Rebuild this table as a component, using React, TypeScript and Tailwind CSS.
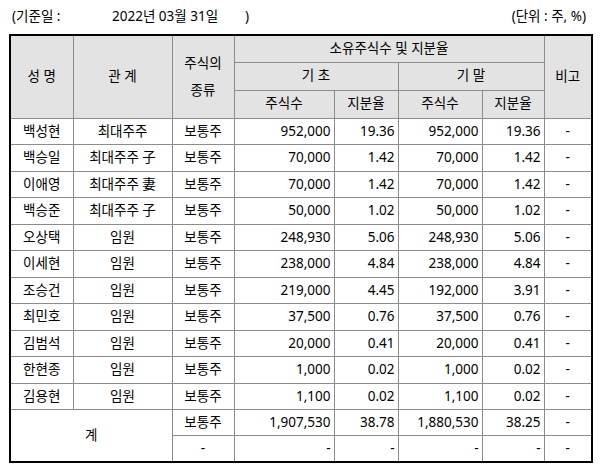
import React from "react";

const rows = [
  ["백성현", "최대주주", "952,000", "19.36", "952,000", "19.36"],
  ["백승일", "최대주주 子", "70,000", "1.42", "70,000", "1.42"],
  ["이애영", "최대주주 妻", "70,000", "1.42", "70,000", "1.42"],
  ["백승준", "최대주주 子", "50,000", "1.02", "50,000", "1.02"],
  ["오상택", "임원", "248,930", "5.06", "248,930", "5.06"],
  ["이세현", "임원", "238,000", "4.84", "238,000", "4.84"],
  ["조승건", "임원", "219,000", "4.45", "192,000", "3.91"],
  ["최민호", "임원", "37,500", "0.76", "37,500", "0.76"],
  ["김범석", "임원", "20,000", "0.41", "20,000", "0.41"],
  ["한현종", "임원", "1,000", "0.02", "1,000", "0.02"],
  ["김용현", "임원", "1,100", "0.02", "1,100", "0.02"],
];

const c = "border border-[#8c8c8c] text-center p-0";
const n = "border border-[#8c8c8c] text-right pr-[3px] p-0";
const h = "border border-[#8c8c8c] text-center p-0 bg-[#e3e3e3] font-normal";

export default function App() {
  return (
    <div
      className="w-[606px] h-[473px] bg-white text-black text-[13.5px] leading-none"
      style={{ fontFamily: '"Noto Sans", "Noto Sans CJK KR", sans-serif' }}
    >
      <div className="flex items-center h-[34px] pl-[12px] pr-[20px]">
        <span className="w-[100px]">(기준일 :</span>
        <span>2022년 03월 31일</span>
        <span className="ml-[27px]">)</span>
        <span className="ml-auto">(단위 : 주, %)</span>
      </div>
      <table className="ml-[9px] border-collapse border-2 border-black table-fixed w-[582px]">
        <colgroup>
          <col className="w-[63px]" />
          <col className="w-[99px]" />
          <col className="w-[62px]" />
          <col className="w-[100px]" />
          <col className="w-[64px]" />
          <col className="w-[84px]" />
          <col className="w-[62px]" />
          <col className="w-[48px]" />
        </colgroup>
        <thead>
          <tr className="h-[27px]">
            <th rowSpan={3} className={h}>성 명</th>
            <th rowSpan={3} className={h}>관 계</th>
            <th rowSpan={3} className={h}>
              <div className="leading-[27px]">주식의<br />종류</div>
            </th>
            <th colSpan={4} className={h}>소유주식수 및 지분율</th>
            <th rowSpan={3} className={h}>비고</th>
          </tr>
          <tr className="h-[28px]">
            <th colSpan={2} className={h}>기 초</th>
            <th colSpan={2} className={h}>기 말</th>
          </tr>
          <tr className="h-[28px]">
            <th className={h}>주식수</th>
            <th className={h}>지분율</th>
            <th className={h}>주식수</th>
            <th className={h}>지분율</th>
          </tr>
        </thead>
        <tbody>
          {rows.map((r) => (
            <tr key={r[0]} className="h-[26.5px]">
              <td className={c}>{r[0]}</td>
              <td className={c}>{r[1]}</td>
              <td className={c}>보통주</td>
              <td className={n}>{r[2]}</td>
              <td className={n}>{r[3]}</td>
              <td className={n}>{r[4]}</td>
              <td className={n}>{r[5]}</td>
              <td className={c}>-</td>
            </tr>
          ))}
          <tr className="h-[26px]">
            <td rowSpan={2} colSpan={2} className={c}>계</td>
            <td className={c}>보통주</td>
            <td className={n}>1,907,530</td>
            <td className={n}>38.78</td>
            <td className={n}>1,880,530</td>
            <td className={n}>38.25</td>
            <td className={c}>-</td>
          </tr>
          <tr className="h-[26px]">
            <td className={c}>-</td>
            <td className={n}>-</td>
            <td className={n}>-</td>
            <td className={n}>-</td>
            <td className={n}>-</td>
            <td className={c}>-</td>
          </tr>
        </tbody>
      </table>
    </div>
  );
}
